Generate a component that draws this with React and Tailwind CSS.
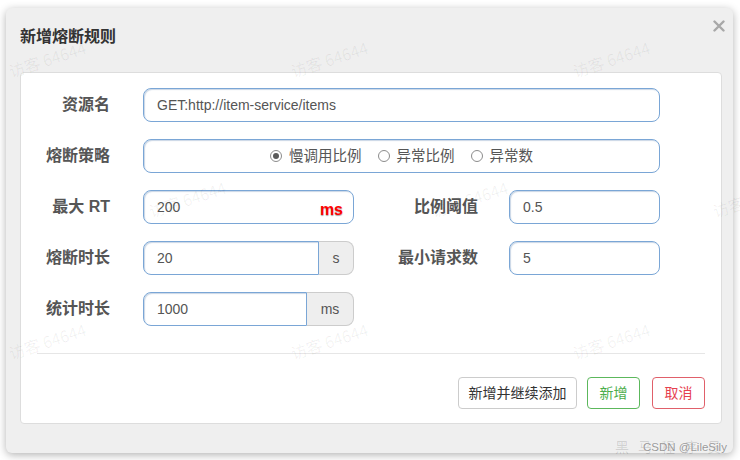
import React from "react";

const marks = [
  [7, 47], [289, 47], [571, 47],
  [147, 187], [429, 187], [711, 187],
  [7, 329], [289, 329], [571, 329],
];

const Label = ({ children, className = "" }) => (
  <div className={"text-right text-[16px] leading-[24px] font-bold text-[#555] " + className}>
    {children}
  </div>
);

const inputCls =
  "h-[34px] border border-[#7aa6d6] rounded-[8px] px-[13px] flex items-center text-[14px] text-[#555] bg-white shadow-[inset_1px_1px_1px_rgba(40,90,150,0.25)]";

const Radio = ({ checked, children }) => (
  <div className="flex items-center gap-[7px]">
    <span className="w-[12px] h-[12px] rounded-full border border-[#8c8c8c] bg-white flex items-center justify-center">
      {checked && <span className="w-[6px] h-[6px] rounded-full bg-[#5a5a5a]" />}
    </span>
    <span className="text-[14.5px] text-[#555] leading-[20px]">{children}</span>
  </div>
);

const Group = ({ value, unit, w, aw }) => (
  <div className="flex h-[34px]">
    <div className={inputCls + " rounded-r-none " + w}>{value}</div>
    <div className={"h-[34px] bg-[#eee] border border-l-0 border-[#ccc] rounded-r-[8px] flex items-center justify-center text-[14px] text-[#555] " + aw}>
      {unit}
    </div>
  </div>
);

export default function App() {
  return (
    <div className="relative w-[740px] h-[460px] bg-white overflow-hidden pt-[8px] pl-[6px] font-['Liberation_Sans','Noto_Sans_CJK_SC',sans-serif]">
      {/* modal */}
      <div className="w-[727px] h-[445px] bg-[#efefef] rounded-[6px] shadow-[0_2px_8px_rgba(0,0,0,0.3)] flex flex-col">
        <div className="relative h-[64px] pl-[14px] pt-[17px]">
          <div className="text-[16px] leading-[24px] font-bold text-[#333]">新增熔断规则</div>
          <button className="absolute right-[8px] top-[12px] w-[12px] h-[12px]">
            <svg viewBox="0 0 12 12" className="w-[12px] h-[12px]">
              <path d="M1.5 1.5 L10.5 10.5 M10.5 1.5 L1.5 10.5" stroke="#a8a8a8" strokeWidth="2.4" strokeLinecap="round" />
            </svg>
          </button>
        </div>

        <div className="ml-[14px] w-[702px] h-[352px] bg-white border border-[#ddd] rounded-[4px] pt-[15px] flex flex-col">
          <div className="flex flex-col gap-[17px]">
            <div className="flex items-center">
              <Label className="w-[89px]">资源名</Label>
              <div className={inputCls + " ml-[33px] w-[517px]"}>GET:http://item-service/items</div>
            </div>

            <div className="flex items-center">
              <Label className="w-[89px]">熔断策略</Label>
              <div className={inputCls + " ml-[33px] w-[517px] justify-center gap-[16px]"}>
                <Radio checked>慢调用比例</Radio>
                <Radio>异常比例</Radio>
                <Radio>异常数</Radio>
              </div>
            </div>

            <div className="flex items-center">
              <Label className="w-[89px]">最大 RT</Label>
              <div className="relative ml-[33px]">
                <div className={inputCls + " w-[211px]"}>200</div>
                <span className="absolute right-[11px] top-[12px] text-[16px] leading-none font-bold text-[#f00] [text-shadow:0_1px_1px_rgba(0,0,0,0.35)]">
                  ms
                </span>
              </div>
              <Label className="w-[124px]">比例阈值</Label>
              <div className={inputCls + " ml-[31px] w-[151px]"}>0.5</div>
            </div>

            <div className="flex items-center">
              <Label className="w-[89px]">熔断时长</Label>
              <div className="ml-[33px]">
                <Group value="20" unit="s" w="w-[176px]" aw="w-[35px]" />
              </div>
              <Label className="w-[124px]">最小请求数</Label>
              <div className={inputCls + " ml-[31px] w-[151px]"}>5</div>
            </div>

            <div className="flex items-center">
              <Label className="w-[89px]">统计时长</Label>
              <div className="ml-[33px]">
                <Group value="1000" unit="ms" w="w-[164px]" aw="w-[47px]" />
              </div>
            </div>
          </div>

          <div className="mx-[16px] mt-[27px] h-px bg-[#e6e6e6]" />

          <div className="flex justify-end gap-[10px] pr-[16px] mt-[23px]">
            <button className="w-[119px] h-[32px] border border-[#ccc] rounded-[4px] bg-white text-[14px] text-[#333]">
              新增并继续添加
            </button>
            <button className="w-[53px] h-[32px] border border-[#5cb85c] rounded-[4px] bg-white text-[14px] text-[#4cae4c]">
              新增
            </button>
            <button className="w-[53px] h-[32px] border border-[#e0606a] rounded-[4px] bg-white text-[14px] text-[#e6414f] ml-[2px]">
              取消
            </button>
          </div>
        </div>
      </div>

      {/* watermarks */}
      <div className="absolute inset-0 pointer-events-none">
        {marks.map(([x, y], i) => (
          <span
            key={i}
            className="absolute w-[86px] h-[22px] leading-[22px] text-[16px] whitespace-nowrap text-black/[0.06] -rotate-[18deg] font-['Noto_Sans_CJK_SC',sans-serif]"
            style={{ left: x, top: y }}
          >
            访客 64644
          </span>
        ))}
        <span className="absolute left-[615px] top-[437px] text-[14px] leading-[18px] tracking-[9px] text-black/[0.12] font-['Noto_Sans_CJK_SC',sans-serif]">
          黑马程序员
        </span>
        <span className="absolute left-[643px] top-[439px] text-[11.5px] leading-[16px] text-[#9a9a9a] [text-shadow:0_0_2px_#fff]">
          CSDN @LileSily
        </span>
      </div>
    </div>
  );
}
